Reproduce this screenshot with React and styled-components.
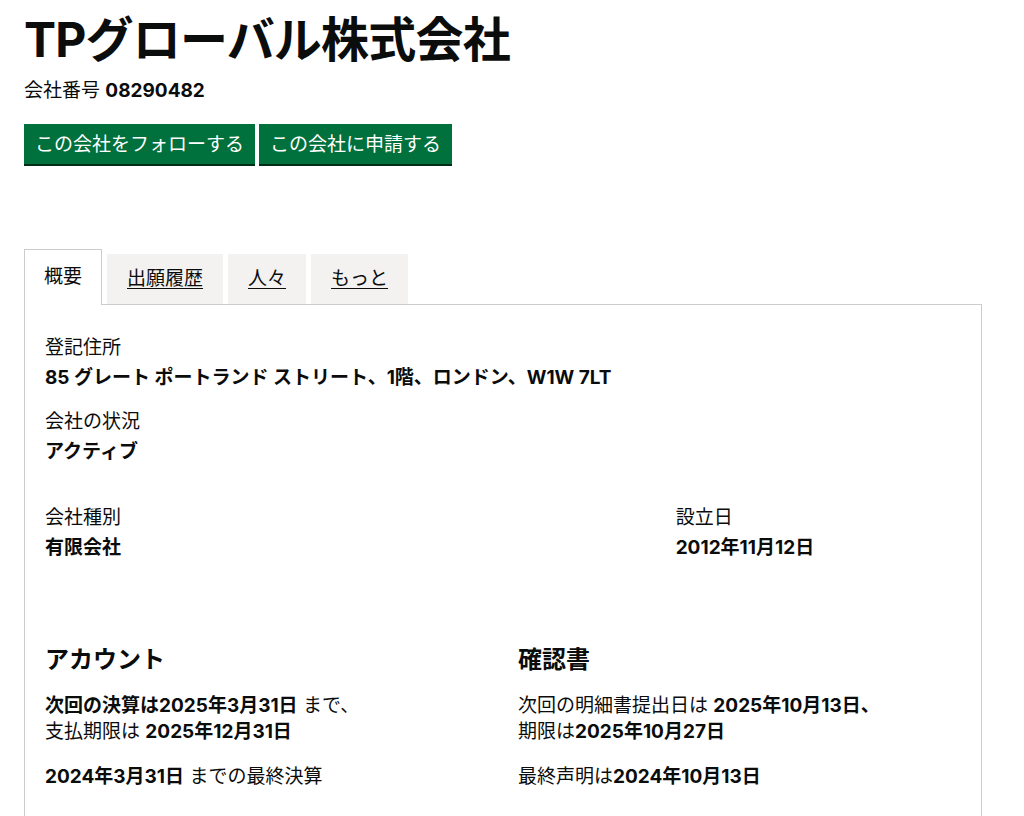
import React from "react";
import styled, { createGlobalStyle } from "styled-components";

const GlobalStyle = createGlobalStyle`
  html, body { margin: 0; padding: 0; background: #ffffff; }
  body {
    font-family: Inter, "Noto Sans CJK JP", "Noto Sans", sans-serif;
    color: #0b0c0c;
    -webkit-font-smoothing: antialiased;
  }
`;

const Page = styled.div`
  width: 958px;
  margin-left: 24px;
  padding-top: 15px;
`;

const Title = styled.h1`
  margin: 0 0 13px;
  font-size: 48px;
  line-height: 50px;
  font-weight: 700;
  letter-spacing: -0.8px;
`;

const CompanyNumber = styled.p`
  margin: 0 0 20px;
  font-size: 19px;
  line-height: 26px;
`;

const Strong = styled.strong`
  font-weight: 700;
`;

const ButtonRow = styled.div`
  display: flex;
  gap: 4px;
  margin-bottom: 85px;
`;

const Button = styled.a`
  display: inline-flex;
  align-items: center;
  height: 40px;
  box-sizing: border-box;
  padding: 0 11px;
  background: #00703c;
  color: #ffffff;
  font-size: 19px;
  line-height: 1;
  text-decoration: none;
  box-shadow: 0 2px 0 #002d18;
  cursor: pointer;
`;

const TabList = styled.ul`
  display: flex;
  align-items: flex-end;
  gap: 5px;
  list-style: none;
  margin: 0;
  padding: 0;
`;

const Tab = styled.li`
  box-sizing: border-box;
  font-size: 19px;
  line-height: 29px;
  position: relative;
  ${(p) =>
    p.$active
      ? `
    background: #ffffff;
    border: 1px solid #cccccc;
    border-bottom: none;
    padding: 12px 19px 14px;
    margin-bottom: -1px;
    z-index: 1;
  `
      : `
    background: #f3f2f1;
    padding: 10px 20px 11px;
  `}
`;

const TabLink = styled.a`
  color: #0b0c0c;
  text-decoration: ${(p) => (p.$active ? "none" : "underline")};
  text-underline-offset: 3px;
  text-decoration-thickness: 1px;
`;

const Panel = styled.div`
  border: 1px solid #cccccc;
  border-bottom: none;
  padding: 30px 20px 80px;
`;

const DefList = styled.dl`
  margin: 0;
`;

const Label = styled.dt`
  margin: 0 0 4px;
  font-size: 19px;
  line-height: 26px;
`;

const Value = styled.dd`
  margin: 0 0 18px;
  font-size: 19px;
  line-height: 26px;
  font-weight: 700;
`;

const Row = styled.div`
  display: flex;
  margin: ${(p) => p.$top || 0}px -15px 0;
`;

const Column = styled.div`
  box-sizing: border-box;
  padding: 0 15px;
  width: ${(p) => p.$width};
`;

const SectionHeading = styled.h2`
  margin: 0 0 18px;
  font-size: 24px;
  line-height: 30px;
  font-weight: 700;
`;

const Body = styled.p`
  margin: 0 0 19px;
  font-size: 19px;
  line-height: 26px;
`;

export default function App() {
  return (
    <>
      <GlobalStyle />
      <Page>
        <Title>TPグローバル株式会社</Title>
        <CompanyNumber>
          会社番号 <Strong>08290482</Strong>
        </CompanyNumber>
        <ButtonRow>
          <Button>この会社をフォローする</Button>
          <Button>この会社に申請する</Button>
        </ButtonRow>

        <TabList>
          <Tab $active>
            <TabLink $active>概要</TabLink>
          </Tab>
          <Tab>
            <TabLink>出願履歴</TabLink>
          </Tab>
          <Tab>
            <TabLink>人々</TabLink>
          </Tab>
          <Tab>
            <TabLink>もっと</TabLink>
          </Tab>
        </TabList>

        <Panel>
          <DefList>
            <Label>登記住所</Label>
            <Value>85 グレート ポートランド ストリート、1階、ロンドン、W1W 7LT</Value>
            <Label>会社の状況</Label>
            <Value>アクティブ</Value>
          </DefList>

          <Row $top={40}>
            <Column $width="66.6667%">
              <DefList>
                <Label>会社種別</Label>
                <Value>有限会社</Value>
              </DefList>
            </Column>
            <Column $width="33.3333%">
              <DefList>
                <Label>設立日</Label>
                <Value>2012年11月12日</Value>
              </DefList>
            </Column>
          </Row>

          <Row $top={66}>
            <Column $width="50%">
              <SectionHeading>アカウント</SectionHeading>
              <Body>
                <Strong>次回の決算は2025年3月31日</Strong> まで、
                <br />
                支払期限は <Strong>2025年12月31日</Strong>
              </Body>
              <Body>
                <Strong>2024年3月31日</Strong> までの最終決算
              </Body>
            </Column>
            <Column $width="50%">
              <SectionHeading>確認書</SectionHeading>
              <Body>
                次回の明細書提出日は <Strong>2025年10月13日、</Strong>
                <br />
                期限は<Strong>2025年10月27日</Strong>
              </Body>
              <Body>
                最終声明は<Strong>2024年10月13日</Strong>
              </Body>
            </Column>
          </Row>
        </Panel>
      </Page>
    </>
  );
}
